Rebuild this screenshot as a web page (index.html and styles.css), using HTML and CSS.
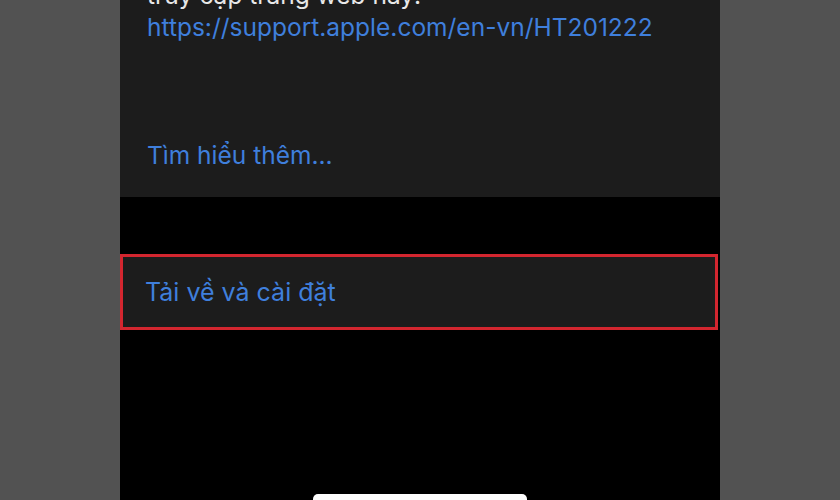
FILE: index.html
```html
<!DOCTYPE html>
<html lang="vi">
<head>
<meta charset="utf-8">
<link rel="stylesheet" href="styles.css">
</head>
<body>
<div class="phone">
  <section class="panel">
    <p class="desc">truy cập trang web này:</p>
    <p class="link">https://support.apple.com/en-vn/HT201222</p>
    <p class="more">Tìm hiểu thêm...</p>
  </section>
  <div class="gap"></div>
  <div class="row">Tải về và cài đặt</div>
  <div class="home"></div>
</div>
</body>
</html>
```
FILE: styles.css
```css
html, body {
  margin: 0;
  padding: 0;
  background: #525252;
  height: 500px;
  overflow: hidden;
}
.phone {
  position: relative;
  width: 600px;
  height: 500px;
  margin-left: 120px;
  background: #000;
  font-family: Inter, "Noto Sans", sans-serif;
}
.panel {
  height: 197px;
  background: #1c1c1c;
  padding-left: 27px;
  box-sizing: border-box;
  overflow: hidden;
}
.panel p {
  margin: 0;
  font-size: 24.5px;
  line-height: 31px;
}
.desc {
  color: #e8e8e8;
  margin-top: -20px !important;
}
.link {
  color: #3f7fdc;
  margin-top: 1px !important;
}
.more {
  color: #3f7fdc;
  margin-top: 97px !important;
}
.gap {
  height: 57px;
}
.row {
  height: 76px;
  box-sizing: border-box;
  width: 598px;
  border: 3px solid #d3262f;
  background: #1c1c1c;
  color: #3f7fdc;
  font-size: 25px;
  padding-left: 22px;
  display: flex;
  align-items: center;
}
.home {
  position: absolute;
  left: 193px;
  top: 494px;
  width: 214px;
  height: 12px;
  border-radius: 5px;
  background: #fff;
}
```
